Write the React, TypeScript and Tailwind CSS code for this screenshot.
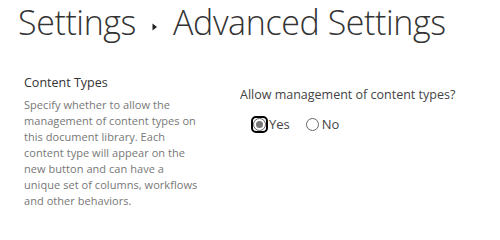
import React from "react";

export default function App() {
  const lines = [
    "Specify whether to allow the",
    "management of content types on",
    "this document library. Each",
    "content type will appear on the",
    "new button and can have a",
    "unique set of columns, workflows",
    "and other behaviors.",
  ];
  return (
    <div className="w-[500px] h-[228px] bg-white overflow-hidden" style={{ fontFamily: '"Open Sans", "Noto Sans", sans-serif' }}>
      <div className="flex items-center pl-[18px] mt-[-1px] h-[46px] text-[#333] text-[34px] font-light leading-[46px] tracking-[-0.4px]">
        <span>Settings</span>
        <svg width="6" height="8" viewBox="0 0 6 8" className="ml-[16px] mr-[15px] mt-[9px]">
          <path d="M0.5 0.5 L5 4 L0.5 7.5 Z" fill="#222" />
        </svg>
        <span>Advanced Settings</span>
      </div>
      <div className="flex mt-[29px]">
        <div className="w-[216px] pl-[24px]">
          <div className="text-[12.5px] leading-[18px] text-[#333]">Content Types</div>
          <div className="mt-[5px] text-[11px] leading-[16px] text-[#777] tracking-[0.05px]">
            {lines.map((l) => (
              <div key={l} className="whitespace-nowrap">{l}</div>
            ))}
          </div>
        </div>
        <div className="pl-[24px] pt-[12px]">
          <div className="text-[12.5px] leading-[18px] text-[#444]">Allow management of content types?</div>
          <div className="flex items-center mt-[11px] ml-[11px] text-[13px] text-[#444]">
            <label className="flex items-center">
              <span className="flex items-center justify-center w-[17px] h-[17px] rounded-[5px] border-2 border-black">
                <span className="flex items-center justify-center w-[13px] h-[13px] rounded-full border border-[#666] bg-white">
                  <span className="w-[7px] h-[7px] rounded-full bg-[#777]" />
                </span>
              </span>
              <span className="ml-[1px]">Yes</span>
            </label>
            <label className="flex items-center ml-[16px]">
              <span className="w-[13px] h-[13px] rounded-full border border-[#666] bg-white" />
              <span className="ml-[3px]">No</span>
            </label>
          </div>
        </div>
      </div>
    </div>
  );
}
